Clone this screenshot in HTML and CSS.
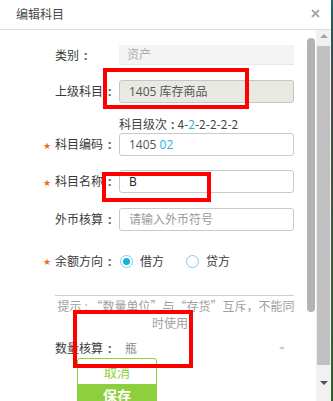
FILE: index.html
```html
<!DOCTYPE html>
<html lang="zh-CN">
<head>
<meta charset="utf-8">
<title>编辑科目</title>
<link rel="stylesheet" href="styles.css">
</head>
<body>
<div class="window">
  <div class="dialog">
    <div class="header">
      <span class="title">编辑科目</span>
      <svg class="close" width="9" height="9" viewBox="0 0 9 9"><path d="M1 1 L8 8 M8 1 L1 8" stroke="#a6a6a6" stroke-width="1.8" fill="none"/></svg>
    </div>
    <div class="body">
      <div class="content">
        <div class="form">
          <div class="row r-type">
            <span class="star"></span><span class="label">类别<span class="colon">:</span></span>
            <div class="field readonly">资产</div>
          </div>
          <div class="row r-parent">
            <span class="star"></span><span class="label">上级科目<span class="colon">:</span></span>
            <div class="field disabled">1405 库存商品</div>
          </div>
          <div class="level">科目级次<span class="colon lv">:</span>4-<span class="hl">2</span>-2-2-2-2</div>
          <div class="row r-code">
            <span class="star">★</span><span class="label">科目编码<span class="colon">:</span></span>
            <div class="field">1405&nbsp;<span class="hl">02</span></div>
          </div>
          <div class="row r-name">
            <span class="star">★</span><span class="label">科目名称<span class="colon">:</span></span>
            <div class="field value">B</div>
          </div>
          <div class="row r-cur">
            <span class="star"></span><span class="label">外币核算<span class="colon">:</span></span>
            <div class="field placeholder">请输入外币符号</div>
          </div>
          <div class="row r-dir">
            <span class="star">★</span><span class="label">余额方向<span class="colon">:</span></span>
            <div class="radios">
              <span class="radio checked"></span><span class="rtext">借方</span>
              <span class="radio"></span><span class="rtext">贷方</span>
            </div>
          </div>
          <div class="sep"></div>
          <div class="hint">提示<span class="colon hc">:</span>“数量单位”与“存货”互斥，不能同时使用！</div>
          <div class="row r-qty">
            <span class="star"></span><span class="label">数量核算<span class="colon">:</span></span>
            <div class="select"><span class="sval">瓶</span><span class="caret"></span></div>
          </div>
          <div class="buttons">
            <div class="btn cancel">取消</div>
            <div class="btn save">保存</div>
          </div>
        </div>
        <div class="inner-track"><div class="inner-thumb"></div></div>
      </div>
      <div class="vscroll">
        <div class="arr-box"><span class="arr up"></span></div>
        <div class="vthumb"></div>
        <div class="vtrack"></div>
        <div class="arr-box down-box"><span class="arr down"></span></div>
      </div>
    </div>
  </div>
  <div class="edge"></div>
  <div class="mark m1"></div>
  <div class="mark m2"></div>
  <div class="mark m3"></div>
</div>
</body>
</html>
```

FILE: styles.css
```css
* { box-sizing: border-box; }
html, body { margin: 0; padding: 0; }
body {
  width: 333px;
  height: 401px;
  overflow: hidden;
  background: #fff;
  font-family: "Open Sans", "Noto Sans CJK SC", sans-serif;
  font-size: 12px;
  line-height: 16px;
  color: #3a3a3a;
}
.window {
  position: relative;
  display: flex;
  width: 333px;
  height: 401px;
}
.dialog {
  width: 331px;
  height: 401px;
  display: flex;
  flex-direction: column;
  overflow: hidden;
}
.edge {
  width: 2px;
  height: 401px;
  background: linear-gradient(#1e6b6b 0, #2a5555 6%, #4a4a4a 20%, #3a5a3a 70%, #2f5f2f 100%);
}
.header {
  height: 30px;
  flex: none;
  border-bottom: 1px solid #dedede;
  display: flex;
  align-items: center;
  justify-content: space-between;
  padding: 0 11px 1px 16px;
}
.title {
  font-family: "Noto Sans CJK SC", sans-serif;
  font-size: 12px;
  color: #4a4a4a;
}
.close { display: block; margin-top: -2px; }
.body {
  flex: 1;
  display: flex;
  min-height: 0;
}
.content {
  width: 316px;
  display: flex;
  overflow: hidden;
}
.form {
  width: 307px;
  display: flex;
  flex-direction: column;
}
.inner-track { width: 8px; padding-top: 8px; }
.inner-thumb {
  width: 8px;
  height: 274px;
  border-radius: 4px;
  background: #b3b3b3;
}
.vscroll {
  width: 15px;
  background: #f1f1f1;
  display: flex;
  flex-direction: column;
  align-items: center;
}
.arr-box {
  height: 16px;
  width: 15px;
  display: flex;
  align-items: center;
  justify-content: center;
  flex: none;
}
.arr { width: 0; height: 0; border-left: 4px solid transparent; border-right: 4px solid transparent; }
.arr.up { border-bottom: 4px solid #a3a3a3; margin-top: -4px; }
.arr.down { border-top: 4px solid #505050; }
.down-box { height: 25px; align-items: flex-start; padding-top: 5px; }
.vthumb {
  width: 13px;
  height: 319px;
  background: #c1c1c1;
  flex: none;
}
.vtrack { flex: 1; }

/* form */
.row {
  display: flex;
  align-items: center;
  padding-left: 43px;
  flex: none;
}
.star {
  width: 12px;
  color: #f26522;
  font-size: 9px;
  line-height: 9px;
  padding-top: 3px;
  font-family: "DejaVu Sans", sans-serif;
}
.label {
  width: 64px;
  font-family: "Noto Sans CJK SC", sans-serif;
  color: #3a3a3a;
  white-space: nowrap;
}
.colon {
  margin-left: 5px;
  font-family: "Open Sans", sans-serif;
  font-weight: bold;
  color: #555;
}
.colon.lv { margin: 0 3px 0 4px; }
.colon.hc { margin: 0 3px 0 3px; font-weight: normal; color: #a0a0a0; }
.field {
  width: 175px;
  height: 23px;
  border: 1px solid #c9c9c9;
  border-radius: 3px;
  padding-left: 9px;
  display: flex;
  align-items: center;
  color: #555;
  font-family: "Open Sans", "Noto Sans CJK SC", sans-serif;
  white-space: nowrap;
}
.field.readonly {
  height: 20px;
  border: none;
  border-bottom: 1px solid #e8e8e8;
  border-radius: 0;
  background: #f4f4f4;
  padding-left: 8px;
  color: #b0b0b0;
}
.field.disabled { background: #e9e9e4; border-color: #c6c6c2; }
.field.value { color: #222; }
.field.placeholder { color: #9a9a9a; }
.hl { color: #29b3e3; }
.r-type { margin-top: 15px; }
.r-parent { margin-top: 15px; }
.level {
  margin-top: 13px;
  padding-left: 119px;
  height: 16px;
  color: #444;
  white-space: nowrap;
  font-family: "Noto Sans CJK SC", sans-serif;
}
.r-code { margin-top: 1px; }
.r-name { margin-top: 14px; }
.r-cur { margin-top: 15px; }
.r-dir { margin-top: 20px; height: 20px; }
.radios { display: flex; align-items: center; padding-left: 1px; }
.radio {
  width: 13px;
  height: 13px;
  border: 1px solid #72d3ed;
  border-radius: 50%;
  display: flex;
  align-items: center;
  justify-content: center;
}
.radio.checked::after {
  content: "";
  width: 7px;
  height: 7px;
  border-radius: 50%;
  background: #12b3da;
}
.rtext {
  margin-left: 7px;
  margin-right: 22px;
  font-family: "Noto Sans CJK SC", sans-serif;
  color: #3a3a3a;
}
.sep {
  margin: 24px 0 0 55px;
  width: 239px;
  height: 1px;
  background: #cfcfcf;
  flex: none;
}
.hint {
  margin: 2px 0 0 55px;
  width: 242px;
  height: 32px;
  flex: none;
  text-align: center;
  color: #a0a0a0;
  font-family: "Noto Sans CJK SC", sans-serif;
}
.r-qty { margin-top: 8px; height: 20px; }
.select {
  width: 175px;
  height: 20px;
  display: flex;
  align-items: center;
  justify-content: space-between;
  padding: 0 9px 0 6px;
}
.sval { color: #888; font-family: "Noto Sans CJK SC", sans-serif; }
.caret {
  width: 0; height: 0;
  border-left: 3px solid transparent;
  border-right: 3px solid transparent;
  border-top: 3px solid #c8c8c8;
}
.buttons {
  margin-left: 77px;
  width: 80px;
  display: flex;
  flex-direction: column;
  flex: none;
}
.btn {
  height: 27px;
  display: flex;
  align-items: center;
  justify-content: center;
  font-family: "Noto Sans CJK SC", sans-serif;
  font-size: 13px;
}
.btn.cancel {
  border: 1px solid #8dd13b;
  border-radius: 3px 3px 0 0;
  color: #8dd13b;
  background: #fff;
}
.btn.save {
  background: #8dcf3c;
  color: #fff;
  font-weight: bold;
  font-size: 14px;
  padding-bottom: 7px;
}

/* annotation overlays */
.mark {
  position: absolute;
  border: 4px solid #ff0000;
}
.m1 { left: 103px; top: 68px; width: 146px; height: 41px; }
.m2 { left: 102px; top: 172px; width: 109px; height: 30px; }
.m3 { left: 73px; top: 310px; width: 120px; height: 58px; }
```
